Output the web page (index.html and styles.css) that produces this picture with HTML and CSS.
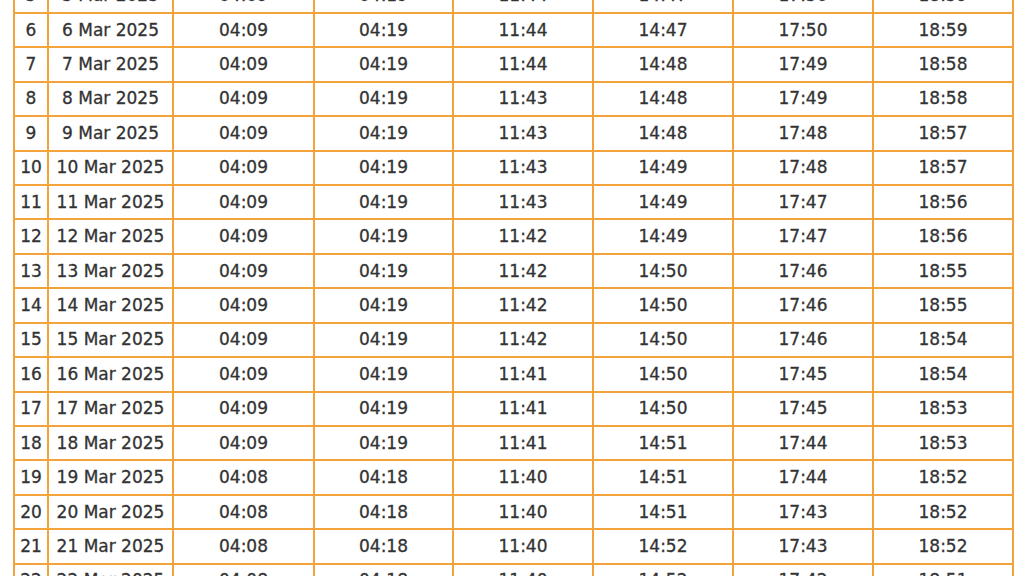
FILE: index.html
```html
<!DOCTYPE html>
<html lang="en">
<head>
<meta charset="utf-8">
<title>Prayer times March 2025</title>
<link rel="stylesheet" href="styles.css">
</head>
<body>
<div class="page">
<table class="times">
<colgroup>
<col class="c-no"><col class="c-date"><col class="c-a"><col class="c-b"><col class="c-t"><col class="c-t"><col class="c-t"><col class="c-t">
</colgroup>
<tbody>
<tr><td>5</td><td>5 Mar 2025</td><td>04:09</td><td>04:19</td><td>11:44</td><td>14:47</td><td>17:50</td><td>18:59</td></tr>
<tr><td>6</td><td>6 Mar 2025</td><td>04:09</td><td>04:19</td><td>11:44</td><td>14:47</td><td>17:50</td><td>18:59</td></tr>
<tr><td>7</td><td>7 Mar 2025</td><td>04:09</td><td>04:19</td><td>11:44</td><td>14:48</td><td>17:49</td><td>18:58</td></tr>
<tr><td>8</td><td>8 Mar 2025</td><td>04:09</td><td>04:19</td><td>11:43</td><td>14:48</td><td>17:49</td><td>18:58</td></tr>
<tr><td>9</td><td>9 Mar 2025</td><td>04:09</td><td>04:19</td><td>11:43</td><td>14:48</td><td>17:48</td><td>18:57</td></tr>
<tr><td>10</td><td>10 Mar 2025</td><td>04:09</td><td>04:19</td><td>11:43</td><td>14:49</td><td>17:48</td><td>18:57</td></tr>
<tr><td>11</td><td>11 Mar 2025</td><td>04:09</td><td>04:19</td><td>11:43</td><td>14:49</td><td>17:47</td><td>18:56</td></tr>
<tr><td>12</td><td>12 Mar 2025</td><td>04:09</td><td>04:19</td><td>11:42</td><td>14:49</td><td>17:47</td><td>18:56</td></tr>
<tr><td>13</td><td>13 Mar 2025</td><td>04:09</td><td>04:19</td><td>11:42</td><td>14:50</td><td>17:46</td><td>18:55</td></tr>
<tr><td>14</td><td>14 Mar 2025</td><td>04:09</td><td>04:19</td><td>11:42</td><td>14:50</td><td>17:46</td><td>18:55</td></tr>
<tr><td>15</td><td>15 Mar 2025</td><td>04:09</td><td>04:19</td><td>11:42</td><td>14:50</td><td>17:46</td><td>18:54</td></tr>
<tr><td>16</td><td>16 Mar 2025</td><td>04:09</td><td>04:19</td><td>11:41</td><td>14:50</td><td>17:45</td><td>18:54</td></tr>
<tr><td>17</td><td>17 Mar 2025</td><td>04:09</td><td>04:19</td><td>11:41</td><td>14:50</td><td>17:45</td><td>18:53</td></tr>
<tr><td>18</td><td>18 Mar 2025</td><td>04:09</td><td>04:19</td><td>11:41</td><td>14:51</td><td>17:44</td><td>18:53</td></tr>
<tr><td>19</td><td>19 Mar 2025</td><td>04:08</td><td>04:18</td><td>11:40</td><td>14:51</td><td>17:44</td><td>18:52</td></tr>
<tr><td>20</td><td>20 Mar 2025</td><td>04:08</td><td>04:18</td><td>11:40</td><td>14:51</td><td>17:43</td><td>18:52</td></tr>
<tr><td>21</td><td>21 Mar 2025</td><td>04:08</td><td>04:18</td><td>11:40</td><td>14:52</td><td>17:43</td><td>18:52</td></tr>
<tr><td>22</td><td>22 Mar 2025</td><td>04:08</td><td>04:18</td><td>11:40</td><td>14:52</td><td>17:42</td><td>18:51</td></tr>
</tbody>
</table>
</div>
</body>
</html>
```

FILE: styles.css
```css
html, body {
  margin: 0;
  padding: 0;
  background: #ffffff;
}

.page {
  padding-left: 13px;
  overflow: hidden;
  height: 576px;
}

.times {
  margin-top: -22.5px;
  table-layout: fixed;
  border-collapse: separate;
  border-spacing: 2px;
  background: #f2a33a;
  font-family: "DejaVu Sans", Verdana, sans-serif;
  font-size: 17px;
  color: #333333;
  -webkit-text-stroke: 0.3px #333333;
}

.c-no { width: 32px; }
.c-date { width: 123px; }
.c-a { width: 139px; }
.c-b { width: 137px; }
.c-t { width: 138px; }

.times td {
  background: #ffffff;
  height: 32.43px;
  padding: 0;
  text-align: center;
  vertical-align: middle;
  white-space: nowrap;
  line-height: 1;
}
```
